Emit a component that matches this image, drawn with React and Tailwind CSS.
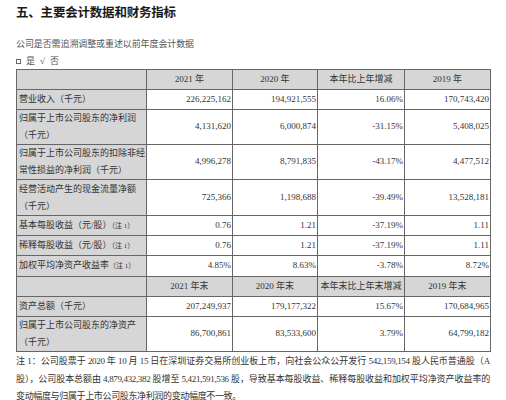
import React from 'react';

const font = { fontFamily: '"Liberation Serif", "Noto Sans CJK SC", serif' };

const rows1 = [
  { label: ['营业收入（千元）'], h: 'h-[20px]', v: ['226,225,162', '194,921,555', '16.06%', '170,743,420'] },
  { label: ['归属于上市公司股东的净利润', '（千元）'], h: 'h-[35px]', v: ['4,131,620', '6,000,874', '-31.15%', '5,408,025'] },
  { label: ['归属于上市公司股东的扣除非经', '常性损益的净利润（千元）'], h: 'h-[35px]', v: ['4,996,278', '8,791,835', '-43.17%', '4,477,512'] },
  { label: ['经营活动产生的现金流量净额', '（千元）'], h: 'h-[36px]', v: ['725,366', '1,198,688', '-39.49%', '13,528,181'] },
  { label: ['基本每股收益（元/股）'], note: true, h: 'h-[20px]', v: ['0.76', '1.21', '-37.19%', '1.11'] },
  { label: ['稀释每股收益（元/股）'], note: true, h: 'h-[20px]', v: ['0.76', '1.21', '-37.19%', '1.11'] },
  { label: ['加权平均净资产收益率'], note: true, h: 'h-[21px]', v: ['4.85%', '8.63%', '-3.78%', '8.72%'] },
];

const rows2 = [
  { label: ['资产总额（千元）'], h: 'h-[20px]', v: ['207,249,937', '179,177,322', '15.67%', '170,684,965'] },
  { label: ['归属于上市公司股东的净资产', '（千元）'], h: 'h-[34px]', v: ['86,700,861', '83,533,600', '3.79%', '64,799,182'] },
];

function HeaderRow({ cols }) {
  return (
    <tr className="h-[20px] bg-[#d6d6d6]">
      <td className="border border-[#666]"></td>
      {cols.map((c, i) => (
        <td key={i} className="border border-[#666] text-center">{c}</td>
      ))}
    </tr>
  );
}

function DataRow({ row }) {
  return (
    <tr className={row.h}>
      <td className="border border-[#666] bg-[#d6d6d6] pl-[2px] leading-[17px] align-middle">
        {row.label.map((l, i) => (
          <div key={i}>
            {l}
            {row.note && <span className="text-[7px]">（注 1）</span>}
          </div>
        ))}
      </td>
      {row.v.map((v, i) => (
        <td key={i} className="border border-[#666] bg-white text-right pr-[1px] align-middle">{v}</td>
      ))}
    </tr>
  );
}

export default function App() {
  return (
    <div className="w-[506px] h-[400px] bg-white overflow-hidden text-[#333]" style={font}>
      <div className="pl-[16px] pt-[5px]">
        <h1 className="text-[12.5px] font-bold text-[#1a1a1a] leading-[16px] tracking-[-0.2px]">五、主要会计数据和财务指标</h1>
        <p className="mt-[17px] text-[9px] leading-[12px] text-[#555] tracking-[-0.1px]">公司是否需追溯调整或重述以前年度会计数据</p>
        <p className="mt-[5px] text-[9px] leading-[12px] text-[#555] flex items-center gap-[5px]">
          <span className="inline-block w-[5px] h-[5px] border border-[#666]"></span>
          <span>是</span>
          <span>√</span>
          <span>否</span>
        </p>
      </div>

      <table className="ml-[16px] mt-[2px] border-collapse table-fixed w-[474px] text-[9px] text-[#333]">
        <colgroup>
          <col className="w-[130px]" />
          <col className="w-[86px]" />
          <col className="w-[85px]" />
          <col className="w-[87px]" />
          <col className="w-[86px]" />
        </colgroup>
        <tbody>
          <HeaderRow cols={['2021 年', '2020 年', '本年比上年增减', '2019 年']} />
          {rows1.map((r, i) => <DataRow key={i} row={r} />)}
          <HeaderRow cols={['2021 年末', '2020 年末', '本年末比上年末增减', '2019 年末']} />
          {rows2.map((r, i) => <DataRow key={i} row={r} />)}
        </tbody>
      </table>

      <div className="ml-[16px] mt-[1px] w-[474px] text-[9px] leading-[17.5px] tracking-[-0.35px] text-[#333]">
        <div className="text-justify [text-align-last:justify] whitespace-nowrap">注 1：公司股票于 2020 年 10 月 15 日在深圳证券交易所创业板上市，向社会公众公开发行 542,159,154 股人民币普通股（A</div>
        <div className="text-justify [text-align-last:justify] whitespace-nowrap">股），公司股本总额由 4,879,432,382 股增至 5,421,591,536 股，导致基本每股收益、稀释每股收益和加权平均净资产收益率的</div>
        <div>变动幅度与归属于上市公司股东净利润的变动幅度不一致。</div>
      </div>
    </div>
  );
}
